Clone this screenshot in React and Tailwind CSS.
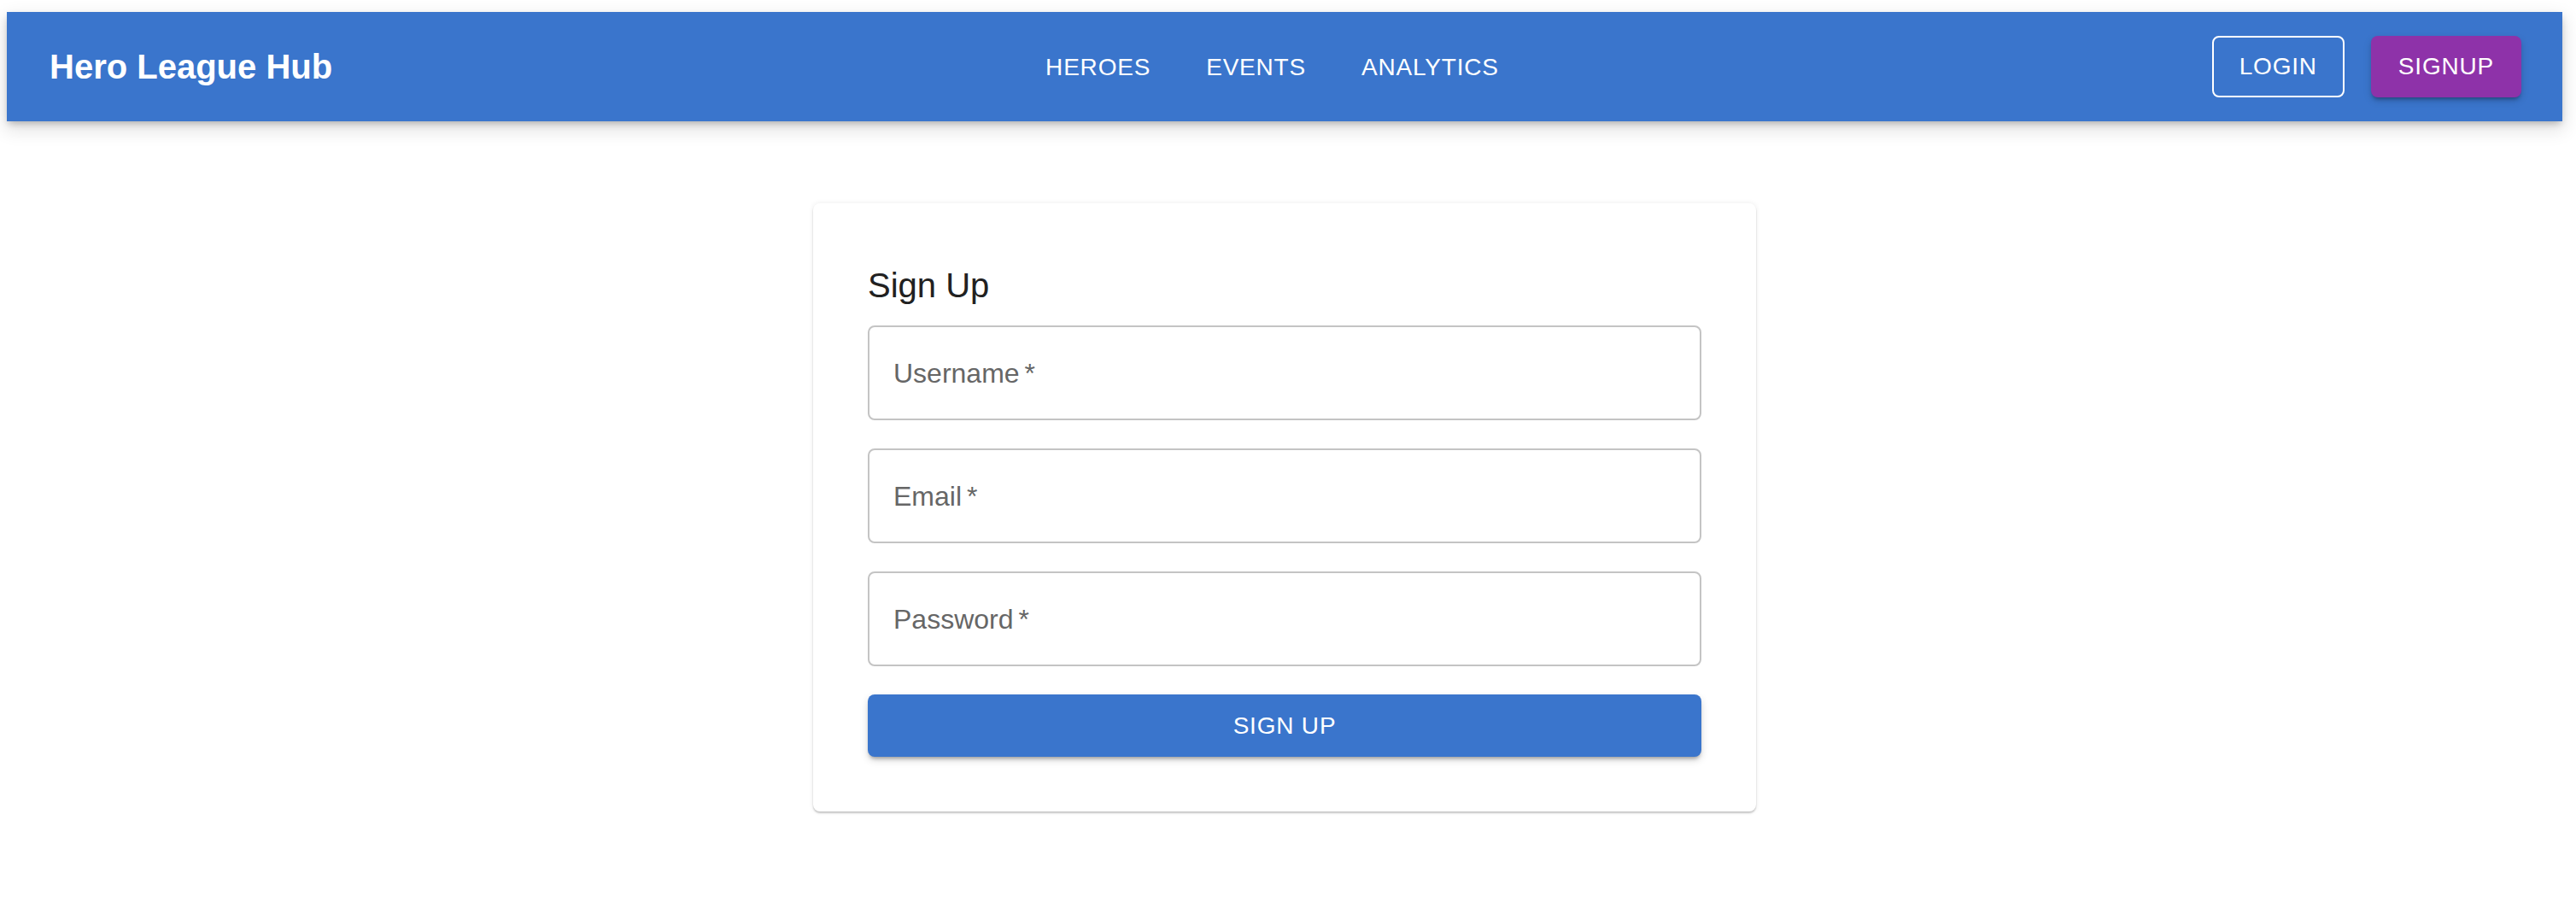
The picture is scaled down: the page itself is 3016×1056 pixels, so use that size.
import React from 'react';

const navItems = ['HEROES', 'EVENTS', 'ANALYTICS'];
const fields = ['Username', 'Email', 'Password'];

const App = () => {
  return (
    <div className="min-h-screen bg-white pt-[14px] pl-[8px] pr-[16px] font-['Liberation_Sans',Arial,sans-serif]">
      <header className="h-[128px] bg-[#3a75cc] flex items-center justify-between pl-[50px] pr-[48px] shadow-[0_4px_8px_-2px_rgba(0,0,0,0.25),0_8px_20px_2px_rgba(0,0,0,0.12)]">
        <h1 className="text-[40px] font-bold text-white leading-none">Hero League Hub</h1>
        <nav className="flex items-center gap-[33px]">
          {navItems.map((item) => (
            <button
              key={item}
              className="px-[16px] py-[12px] text-[28px] leading-[1.75] tracking-[0.8px] text-white"
            >
              {item}
            </button>
          ))}
        </nav>
        <div className="flex items-center gap-[31px]">
          <button className="h-[72px] px-[30px] border-2 border-white rounded-[8px] text-[28px] tracking-[0.8px] text-white">
            LOGIN
          </button>
          <button className="h-[72px] px-[32px] rounded-[8px] bg-[#8e32a9] text-[28px] tracking-[0.8px] text-white shadow-[0_4px_4px_-2px_rgba(0,0,0,0.3),0_4px_10px_0_rgba(0,0,0,0.15)]">
            SIGNUP
          </button>
        </div>
      </header>

      <main className="flex justify-center pt-[96px]">
        <div className="w-[1104px] bg-white rounded-[8px] p-[64px] shadow-[0_2px_2px_0_rgba(0,0,0,0.2),0_0_6px_0_rgba(0,0,0,0.08)]">
          <h2 className="text-[40px] leading-[64px] text-[#212121] mb-[15px]">Sign Up</h2>
          <form className="flex flex-col gap-[33px]">
            {fields.map((f) => (
              <div
                key={f}
                className="h-[111px] border-2 border-[#c4c4c4] rounded-[8px] flex items-center px-[28px]"
              >
                <span className="text-[32px] text-[#666666]">
                  {f}
                  <span className="ml-[6px]">*</span>
                </span>
              </div>
            ))}
            <button
              type="button"
              className="h-[73px] w-full bg-[#3a75cc] rounded-[8px] text-[28px] tracking-[0.8px] text-white shadow-[0_4px_4px_-2px_rgba(0,0,0,0.3),0_4px_10px_0_rgba(0,0,0,0.15)]"
            >
              SIGN UP
            </button>
          </form>
        </div>
      </main>
    </div>
  );
};

export default App;
